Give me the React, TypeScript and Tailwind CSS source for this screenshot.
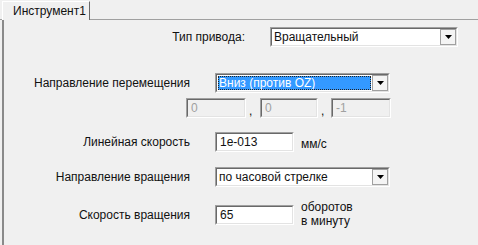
import React from "react";

function Sunken({ className = "", children, inner = "bg-white" }: { className?: string; children?: React.ReactNode; inner?: string }) {
  return (
    <div className={`border border-t-[#a0a0a0] border-l-[#a0a0a0] border-b-white border-r-white ${className}`}>
      <div className={`h-full w-full border border-t-[#696969] border-l-[#696969] border-b-[#e3e3e3] border-r-[#e3e3e3] ${inner}`}>
        {children}
      </div>
    </div>
  );
}

function Arrow() {
  return (
    <div className="h-full w-[16px] shrink-0 border border-[#a0a0a0] bg-[#f4f4f4] flex items-center justify-center">
      <svg width="7" height="4" viewBox="0 0 7 4">
        <path d="M0 0H7L3.5 4Z" fill="#000" />
      </svg>
    </div>
  );
}

function Select({ text, width, selected = false }: { text: string; width: string; selected?: boolean }) {
  return (
    <Sunken className={`${width} h-[20px]`}>
      <div className="flex h-full">
        <div className="flex-1 flex items-center pl-[1px] pr-[1px] py-[1px]">
          {selected ? (
            <div className="w-full h-full bg-[#3399ff] text-white flex items-center pl-[1px] outline outline-1 outline-dotted outline-[#222] -outline-offset-1 leading-none">
              {text}
            </div>
          ) : (
            <div className="pl-[1px] leading-none">{text}</div>
          )}
        </div>
        <Arrow />
      </div>
    </Sunken>
  );
}

function Input({ text, width, disabled = false }: { text: string; width: string; disabled?: boolean }) {
  return (
    <Sunken className={`${width} h-[20px]`} inner={disabled ? "bg-[#f0f0f0]" : "bg-white"}>
      <div className={`h-full flex items-center pl-[3px] leading-none ${disabled ? "text-[#a0a0a0]" : ""}`}>{text}</div>
    </Sunken>
  );
}

export default function App() {
  return (
    <div
      className="w-[478px] h-[245px] bg-[#f0f0f0] overflow-hidden text-[12px] text-[#111] flex flex-col"
      style={{ fontFamily: '"Liberation Sans", Arial, sans-serif' }}
    >
      {/* tab strip */}
      <div className="flex h-[20px] shrink-0">
        <div className="w-[2px] border-b border-[#a0a0a0]" />
        <div className="mt-[1px] w-[88px] border-l border-t border-l-white border-t-white border-r border-r-[#696969] flex items-center pl-[10px] leading-none">
          Инструмент1
        </div>
        <div className="flex-1 border-b border-b-[#a0a0a0]" />
      </div>
      {/* panel */}
      <div className="flex-1 ml-[2px] border-l-2 border-l-[#8a8a8a] flex flex-col -ml-0">
        <div className="flex items-center mt-[7px]">
          <div className="w-[241px] text-right leading-none">Тип привода:</div>
          <div className="ml-[25px]">
            <Select text="Вращательный" width="w-[188px]" />
          </div>
        </div>
        <div className="flex items-center mt-[26px]">
          <div className="w-[186px] text-right leading-none">Направление перемещения</div>
          <div className="ml-[25px]">
            <Select text="Вниз (против OZ)" width="w-[175px]" selected />
          </div>
        </div>
        <div className="flex items-end mt-[5px] pl-[182px]">
          <Input text="0" width="w-[60px]" disabled />
          <div className="w-[14px] pl-[3px] leading-none pb-[1px]">,</div>
          <Input text="0" width="w-[58px]" disabled />
          <div className="w-[13px] pl-[3px] leading-none pb-[1px]">,</div>
          <Input text="-1" width="w-[60px]" disabled />
        </div>
        <div className="flex items-center mt-[14px]">
          <div className="w-[186px] text-right leading-none">Линейная скорость</div>
          <div className="ml-[25px]">
            <Input text="1e-013" width="w-[79px]" />
          </div>
          <div className="ml-[7px] leading-none pt-[4px]">мм/с</div>
        </div>
        <div className="flex items-center mt-[15px]">
          <div className="w-[186px] text-right leading-none">Направление вращения</div>
          <div className="ml-[25px]">
            <Select text="по часовой стрелке" width="w-[175px]" />
          </div>
        </div>
        <div className="flex items-center mt-[15px]">
          <div className="w-[186px] text-right leading-none">Скорость вращения</div>
          <div className="ml-[25px]">
            <Input text="65" width="w-[79px]" />
          </div>
          <div className="ml-[7px] leading-[14px] -mt-[2px]">
            <div>оборотов</div>
            <div>в минуту</div>
          </div>
        </div>
      </div>
    </div>
  );
}
